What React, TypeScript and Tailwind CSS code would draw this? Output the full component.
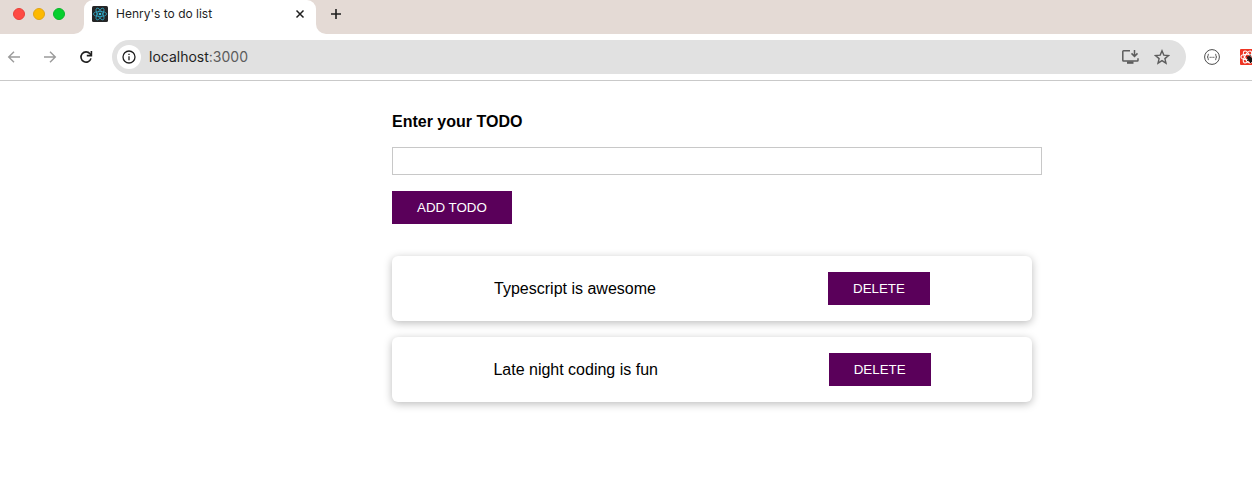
import { useState } from "react";

function ReactMark() {
  return (
    <svg viewBox="0 0 16 16" className="size-4 shrink-0" fill="none">
      <rect width="16" height="16" rx="1.5" fill="#242526" />
      <g stroke="#2fa6c4" strokeWidth="0.8">
        <ellipse cx="8" cy="8" rx="6.6" ry="2.6" />
        <ellipse cx="8" cy="8" rx="6.6" ry="2.6" transform="rotate(60 8 8)" />
        <ellipse cx="8" cy="8" rx="6.6" ry="2.6" transform="rotate(120 8 8)" />
      </g>
      <circle cx="8" cy="8" r="1.3" fill="#35c0e0" />
    </svg>
  );
}

function TabStrip() {
  return (
    <div className="flex h-[34px] bg-white">
      <div className="flex w-[84px] shrink-0 gap-2 rounded-br-[10px] bg-[#e4dad5] pt-2 pl-[13px]">
        <span className="size-3 rounded-full border border-[#e8403a] bg-[#fe4a43]" />
        <span className="size-3 rounded-full border border-[#e0a416] bg-[#fdb900]" />
        <span className="size-3 rounded-full border border-[#0ab52a] bg-[#06cf2e]" />
      </div>
      <div className="w-[232px] shrink-0 bg-[#e4dad5]">
        <div className="flex h-[34px] items-start rounded-t-[9px] bg-white pt-[6px] pr-[11px] pl-2">
          <ReactMark />
          <span className="ml-2 flex-1 font-['Inter',sans-serif] text-[12px] leading-4 text-[#1f1f1f]">
            Henry&apos;s to do list
          </span>
          <svg viewBox="0 0 10 10" className="mt-[3px] size-[10px]" stroke="#1f1f1f" strokeWidth="1.5">
            <path d="M1.500 1.500l7 7M8.500 1.500l-7 7" />
          </svg>
        </div>
      </div>
      <div className="flex-1 rounded-bl-[10px] bg-[#e4dad5] pt-2 pl-[14px]">
        <svg viewBox="0 0 12 12" className="size-3" stroke="#1f1f1f" strokeWidth="1.6">
          <path d="M6 1v10M1 6h10" />
        </svg>
      </div>
    </div>
  );
}

function Toolbar() {
  return (
    <div className="flex h-[47px] items-center overflow-hidden border-b border-[#c9c9c9] bg-white">
      <svg viewBox="0 0 14 14" className="ml-[7px] size-[14px] shrink-0" fill="none" stroke="#9b9b9b" strokeWidth="1.4">
        <path d="M13 7H2M7 1.7L1.7 7 7 12.3" />
      </svg>
      <svg viewBox="0 0 14 14" className="ml-[22px] size-[14px] shrink-0" fill="none" stroke="#9b9b9b" strokeWidth="1.4">
        <path d="M1 7h11M7 1.7L12.3 7 7 12.3" />
      </svg>
      <svg viewBox="0 0 14 14" className="ml-[22px] size-[14px] shrink-0" fill="none" stroke="#1f1f1f" strokeWidth="1.6">
        <path d="M12 8.400A5.100 5.100 0 1 1 11 3.700L12.300 5.200" />
        <path d="M12.400 1v4.600H7.800" />
      </svg>
      <div className="ml-[19px] flex h-[34px] w-[1074px] shrink-0 items-center rounded-full bg-[#e1e1e1] pr-4 pl-[5px]">
        <span className="flex size-6 items-center justify-center rounded-full bg-white">
          <svg viewBox="0 0 14 14" className="size-[14px]" fill="none" stroke="#1f1f1f" strokeWidth="1.3">
            <circle cx="7" cy="7" r="6" />
            <path d="M7 6.2v4M7 3.7v1.4" />
          </svg>
        </span>
        <span className="ml-2 flex-1 font-['Inter',sans-serif] text-[14px] leading-5 text-[#1f1f1f]">
          localhost<span className="text-[#5c5c5c]">:3000</span>
        </span>
        <svg viewBox="0 0 18 16" className="h-4 w-[18px]" fill="none" stroke="#5c5c5c" strokeWidth="1.500">
          <path d="M9 1.800H2.600a.8.8 0 0 0-.8.8V11.200a.8.8 0 0 0 .8.8h13.600a.8.8 0 0 0 .8-.8V9.300" />
          <path d="M13.500 1v6.200M10.500 4.400l3 3 3-3" />
          <path d="M6 13.600h6.500" strokeWidth="2.400" />
        </svg>
        <svg viewBox="0 0 16 16" className="ml-[15px] size-4" fill="none" stroke="#5c5c5c" strokeWidth="1.4">
          <path d="M8 1.8l1.8 4.3 4.7.4-3.6 3.1 1.1 4.6L8 11.7l-4 2.500 1.100-4.600-3.600-3.100 4.700-.4z" />
        </svg>
      </div>
      <svg viewBox="0 0 16 16" className="ml-[18px] size-4 shrink-0" fill="none" stroke="#4c4c4c">
        <circle cx="8" cy="8" r="7.4" />
        <path d="M4.900 5.200c-1 0-.8.7-.8 1.500S3.800 8 3.100 8c.7 0 1 .5 1 1.300s-.2 1.500.8 1.500M11.100 5.200c1 0 .8.7.8 1.500s.3 1.300 1 1.300c-.7 0-1 .5-1 1.300s.2 1.500-.8 1.500" />
        <path d="M5.600 8.300h1.200M7.400 8.300h1.200M9.200 8.300h1.200" />
      </svg>
      <svg viewBox="0 0 16 16" className="ml-5 size-4 shrink-0" fill="none">
        <rect width="16" height="16" rx="1" fill="#ee3524" />
        <g stroke="#fff" strokeWidth="1.1">
          <ellipse cx="7.500" cy="8" rx="6.600" ry="2.700" />
          <ellipse cx="7.500" cy="8" rx="6.600" ry="2.700" transform="rotate(60 7.500 8)" />
          <ellipse cx="7.500" cy="8" rx="6.600" ry="2.700" transform="rotate(120 7.500 8)" />
        </g>
        <ellipse cx="10" cy="10.200" rx="2.200" ry="3.400" fill="#161616" transform="rotate(-40 10 10.200)" />
        <path d="M6.500 7.500l3 2M10 5.500v3M7 11.500l3-1M10.500 12v2" stroke="#161616" strokeWidth="1" />
      </svg>
    </div>
  );
}

const buttonClass =
  "block h-[33px] cursor-pointer bg-[#5a005a] px-[25px] text-[13.333px] leading-[15px] whitespace-nowrap text-white";

export default function App() {
  const [draft, setDraft] = useState("");
  const [todos, setTodos] = useState(["Typescript is awesome", "Late night coding is fun"]);

  const addTodo = () => {
    if (draft.trim()) {
      setTodos([...todos, draft.trim()]);
      setDraft("");
    }
  };

  return (
    <div className="min-h-[495px] bg-white font-['Liberation_Sans',Arial,sans-serif] text-black">
      <TabStrip />
      <Toolbar />
      <main className="ml-[392px] w-[650px] pt-[31px]">
        <label htmlFor="todo" className="block text-[16px] leading-[19px] font-bold">
          Enter your TODO
        </label>
        <input
          id="todo"
          value={draft}
          onChange={(e) => setDraft(e.target.value)}
          className="mt-4 block h-7 w-full border border-[#c8c8c8] px-2 outline-none"
        />
        <button onClick={addTodo} className={`mt-4 ${buttonClass}`}>
          ADD TODO
        </button>
        <ul className="mt-8 flex w-[640px] flex-col gap-4">
          {todos.map((todo, index) => (
            <li
              key={index}
              className="flex h-[65px] items-center justify-around rounded-[6px] bg-white p-4 shadow-[0_2px_8px_rgba(0,0,0,0.27)]"
            >
              <span className="text-[16px] leading-[19px]">{todo}</span>
              <button onClick={() => setTodos(todos.filter((_, i) => i !== index))} className={buttonClass}>
                DELETE
              </button>
            </li>
          ))}
        </ul>
      </main>
    </div>
  );
}
